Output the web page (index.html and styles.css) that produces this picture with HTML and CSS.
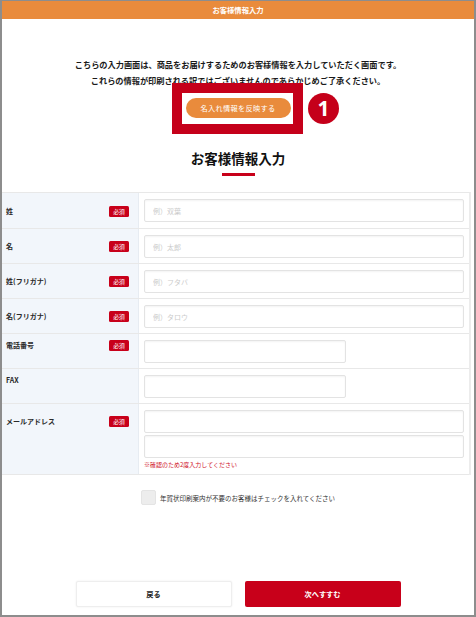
FILE: index.html
```html
<!DOCTYPE html>
<html lang="ja">
<head>
<meta charset="utf-8">
<title>お客様情報入力</title>
<link rel="stylesheet" href="styles.css">
</head>
<body>
<div class="frame">
  <div class="topbar">お客様情報入力</div>
  <p class="intro">こちらの入力画面は、商品をお届けするためのお客様情報を入力していただく画面です。<br>これらの情報が印刷される訳ではございませんのであらかじめご了承ください。</p>
  <div class="reflect-row"><button class="reflect-btn">名入れ情報を反映する</button></div>
  <h1 class="heading">お客様情報入力</h1>
  <div class="underline"></div>

  <div class="form-table">
    <div class="row first">
      <div class="label"><span>姓</span><span class="req">必須</span></div>
      <div class="field"><input class="inp" placeholder="例）双葉"></div>
    </div>
    <div class="row">
      <div class="label"><span>名</span><span class="req">必須</span></div>
      <div class="field"><input class="inp" placeholder="例）太郎"></div>
    </div>
    <div class="row">
      <div class="label"><span>姓(フリガナ)</span><span class="req">必須</span></div>
      <div class="field"><input class="inp" placeholder="例）フタバ"></div>
    </div>
    <div class="row">
      <div class="label"><span>名(フリガナ)</span><span class="req">必須</span></div>
      <div class="field"><input class="inp" placeholder="例）タロウ"></div>
    </div>
    <div class="row">
      <div class="label tight"><span>電話番号</span><span class="req">必須</span></div>
      <div class="field"><input class="inp narrow"></div>
    </div>
    <div class="row">
      <div class="label tight"><span>FAX</span></div>
      <div class="field"><input class="inp narrow"></div>
    </div>
    <div class="row">
      <div class="label"><span>メールアドレス</span><span class="req">必須</span></div>
      <div class="field email">
        <input class="inp">
        <input class="inp second">
        <p class="note">※確認のため2度入力してください</p>
      </div>
    </div>
  </div>

  <label class="check-row"><span class="checkbox"></span><span>年賀状印刷案内が不要のお客様はチェックを入れてください</span></label>

  <div class="actions">
    <button class="btn back">戻る</button>
    <button class="btn next">次へすすむ</button>
  </div>

  <div class="annot-box"></div>
  <div class="annot-num">1</div>
</div>
</body>
</html>
```
FILE: styles.css
```css
* { box-sizing: border-box; margin: 0; padding: 0; }
body {
  margin: 0;
  background: #fff;
  font-family: "Noto Sans CJK JP", "Noto Sans", sans-serif;
  color: #222;
}
.frame {
  position: relative;
  width: 476px;
  height: 617px;
  border: 2px solid #8d8d8d;
  border-top-width: 1px;
  background: #fff;
  overflow: hidden;
}
.topbar {
  height: 18px;
  background: #e98b3c;
  color: #fff;
  font-size: 7.3px;
  font-weight: 700;
  display: flex;
  align-items: center;
  justify-content: center;
}
.intro {
  padding-top: 37px;
  text-align: center;
  font-size: 8.2px;
  font-weight: 700;
  line-height: 16px;
  color: #1a1a1a;
}
.reflect-row {
  margin-top: 10px;
  display: flex;
  justify-content: center;
}
.reflect-btn {
  width: 105px;
  height: 20px;
  border: none;
  border-radius: 10px;
  background: #e98b3c;
  color: #fff;
  font-family: inherit;
  font-size: 7.2px;
  letter-spacing: 0.3px;
}
.heading {
  margin-top: 30px;
  text-align: center;
  font-size: 13.5px;
  font-weight: 700;
  line-height: 20px;
  color: #111;
}
.underline {
  width: 33px;
  height: 3px;
  margin: 5px auto 0;
  background: #c8001a;
}
.form-table {
  margin-top: 16px;
  margin-right: 3px;
  border-top: 1px solid #e8e8e8;
  border-right: 2px solid #ececec;
}
.row {
  display: grid;
  grid-template-columns: 137px 1fr;
  border-bottom: 1px solid #e8e8e8;
}
.label {
  background: #f2f6fb;
  border-right: 1px solid #e7ecf2;
  padding: 12px 9px 0 4px;
  display: flex;
  justify-content: space-between;
  align-items: flex-start;
  font-size: 7px;
  font-weight: 700;
  line-height: 10px;
  color: #2a2a2a;
}
.row.first .label { padding-top: 13px; }
.label.tight { padding-top: 6px; }
.req {
  width: 20px;
  height: 11px;
  margin-top: -0.5px;
  border-radius: 1.5px;
  background: #c8001a;
  color: #fff;
  font-size: 5.8px;
  font-weight: 400;
  line-height: 11px;
  text-align: center;
}
.field {
  padding: 6px 5px 5px;
}
.row.first .field { padding-bottom: 6px; }
.inp {
  display: block;
  width: 100%;
  height: 23px;
  border: 1px solid #e3e3e3;
  border-radius: 2px;
  box-shadow: inset 0 1px 2px rgba(0, 0, 0, 0.05);
  background: #fff;
  font-family: inherit;
  font-size: 7px;
  padding-left: 8px;
  outline: none;
}
.inp::placeholder { color: #cbcbcb; }
.inp.narrow { width: 202px; }
.inp.second { margin-top: 2px; }
.field.email { padding-bottom: 4px; }
.note {
  margin-top: 2px;
  font-size: 6px;
  line-height: 10px;
  color: #d0101f;
}
.check-row {
  margin-top: 15px;
  display: flex;
  justify-content: center;
  align-items: center;
  gap: 4px;
  font-size: 6.5px;
  color: #333;
}
.checkbox {
  width: 15px;
  height: 15px;
  border: 1px solid #e4e4e4;
  border-radius: 2px;
  background: #ededed;
}
.actions {
  margin-top: 76px;
  display: flex;
  justify-content: center;
  gap: 13px;
}
.btn {
  width: 156px;
  height: 26px;
  font-family: inherit;
  font-size: 7.2px;
  font-weight: 700;
  border-radius: 2px;
}
.btn.back {
  background: #fff;
  border: 1px solid #eeeeee;
  box-shadow: 0 0 2px rgba(0, 0, 0, 0.08);
  color: #222;
}
.btn.next {
  background: #c8001a;
  border: none;
  color: #fff;
}
.annot-box {
  position: absolute;
  left: 170px;
  top: 82px;
  width: 131px;
  height: 51px;
  border: 10px solid #c5001a;
}
.annot-num {
  position: absolute;
  left: 306px;
  top: 92px;
  width: 31px;
  height: 31px;
  border-radius: 50%;
  background: #c5001a;
  color: #fff;
  font-family: "Noto Sans", sans-serif;
  font-size: 21px;
  font-weight: 700;
  display: flex;
  align-items: center;
  justify-content: center;
  line-height: 1;
}
```
